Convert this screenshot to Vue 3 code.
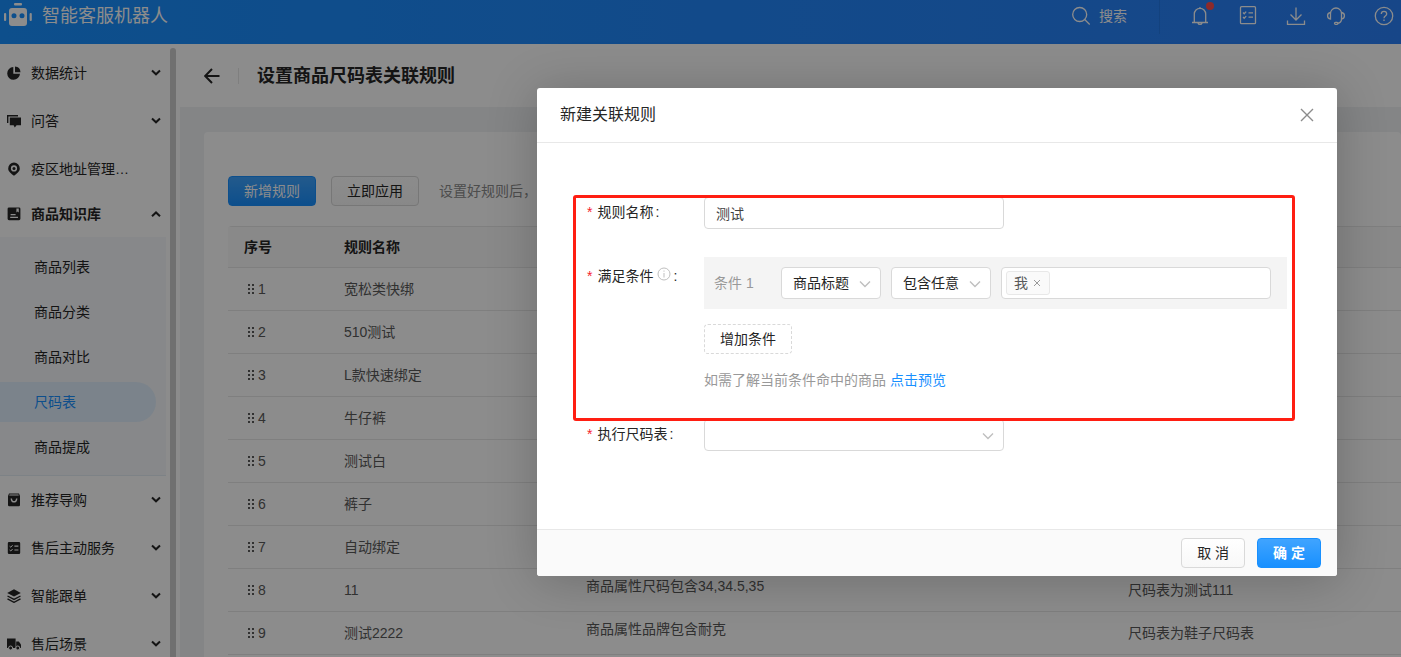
<script setup>
import { ref } from 'vue'

const menuTop = [
  { label: '数据统计', icon: 'pie', arrow: true },
  { label: '问答', icon: 'chat', arrow: true },
  { label: '疫区地址管理…', icon: 'pin', arrow: false }
]
const subMenu = ['商品列表', '商品分类', '商品对比', '尺码表', '商品提成']
const menuBottom = [
  { label: '推荐导购', icon: 'bag', arrow: true },
  { label: '售后主动服务', icon: 'list', arrow: true },
  { label: '智能跟单', icon: 'layers', arrow: true },
  { label: '售后场景', icon: 'truck', arrow: true }
]
const icons = {
  pie: '<path d="M6.3 1A6.4 6.4 0 1 0 13 7.8H6.3z"/><path d="M8 .6V6.2h5.5A6 6 0 0 0 8 .6z"/>',
  chat: '<path d="M0 1h11v1.4H1.4V9H0z"/><path d="M2.8 3.6H14v7.6H9.6L7.8 13.4 6.6 11.2H2.8z"/>',
  pin: '<path fill-rule="evenodd" d="M7 .6a5.8 5.8 0 0 1 5.8 5.8c0 3.2-3 5-5.8 7.4C4.200 11.400 1.200 9.600 1.200 6.400A5.800 5.800 0 0 1 7 .6zM7 3.300a3.100 3.100 0 1 0 0 6.200 3.100 3.100 0 0 0 0-6.200z"/><circle cx="7" cy="6.400" r="1.500"/>',
  book: '<path fill-rule="evenodd" d="M2 .4h10a1.400 1.400 0 0 1 1.400 1.400v10a1.400 1.400 0 0 1-1.400 1.400H2A1.400 1.400 0 0 1 .6 11.800V1.800A1.400 1.400 0 0 1 2 .4zM9.400 1.400v4l1.200-1 1.200 1v-4zM3.600 7v1.200h5V7zM3.200 9.800v1.300h7.800V9.800z"/>',
  bag: '<path fill-rule="evenodd" d="M2 .4h10l1 2.600v9a1.200 1.200 0 0 1-1.200 1.200H2.200A1.200 1.200 0 0 1 1 12V3zM2.600 1.600l-.4 1h9.600l-.4-1zM3.600 5.400c0 5.600 6.800 5.600 6.800 0H9c0 3.400-4 3.400-4 0z"/>',
  list: '<path fill-rule="evenodd" d="M2 1h10a1.200 1.200 0 0 1 1.200 1.200v9.600A1.200 1.200 0 0 1 12 13H2A1.200 1.200 0 0 1 .8 11.800V2.200A1.200 1.200 0 0 1 2 1zM7.400 4.600v1.200h4V4.600zM7.400 8.400v1.200h4V8.400z"/><path fill="none" stroke="#fff" d="M2.600 5.200l1.200 1 1.800-2M2.600 9l1.200 1 1.800-2"/>',
  layers: '<path d="M7 .2l6.800 3.700L7 7.600.2 3.900z"/><path fill="none" stroke="currentColor" stroke-width="1.400" d="M.5 7L7 10.400 13.500 7M.5 9.900L7 13.300l6.500-3.400"/>',
  truck: '<path d="M0 1.500h8.600V11H0z"/><path d="M9.200 4.400h2.600L14 7.400V11H9.200z"/><circle cx="3.600" cy="11" r="2" stroke="#fff"/><circle cx="10.800" cy="11" r="2" stroke="#fff"/>'
}
const rows = [
  { id: 1, name: '宽松类快绑' },
  { id: 2, name: '510测试' },
  { id: 3, name: 'L款快速绑定' },
  { id: 4, name: '牛仔裤' },
  { id: 5, name: '测试白' },
  { id: 6, name: '裤子' },
  { id: 7, name: '自动绑定' },
  { id: 8, name: '11', cond: '商品属性尺码包含34,34.5,35', action: '尺码表为测试111' },
  { id: 9, name: '测试2222', cond: '商品属性品牌包含耐克', action: '尺码表为鞋子尺码表' }
]
const ruleName = ref('测试')
const field = ref('商品标题')
const operator = ref('包含任意')
const sizeTable = ref('')
const tags = ref(['我'])
</script>

<template>
  <div class="shell">
    <header class="topbar">
      <div class="brand">
        <svg class="logo" viewBox="0 0 30 26" width="30" height="26" fill="#fff">
          <rect x="10" y="1" width="8" height="2.600" rx="1" />
          <rect x="0" y="11" width="2.200" height="8" rx="1" />
          <rect x="25.600" y="11" width="2.200" height="8" rx="1" />
          <path fill-rule="evenodd" d="M8 6h12a3 3 0 0 1 3 3v12a3 3 0 0 1-3 3H8a3 3 0 0 1-3-3V9a3 3 0 0 1 3-3zM10 11.200a2.500 2.500 0 1 0 0 5 2.500 2.500 0 0 0 0-5zM18 11.200a2.500 2.500 0 1 0 0 5 2.500 2.500 0 0 0 0-5z" />
        </svg>
        <span>智能客服机器人</span>
      </div>
      <button class="search" type="button">
        <svg viewBox="0 0 20 20" width="20" height="20"><circle cx="8.700" cy="8.500" r="7" /><path d="M13.700 13.500l5 5" /></svg>
        <span>搜索</span>
      </button>
      <nav class="tools" aria-label="工具">
        <button class="bell" type="button" aria-label="通知">
          <svg viewBox="0 0 20 20" width="20" height="20"><path d="M2 16.500h16M4.300 16.500V8a5.700 5.700 0 0 1 11.400 0v8.500M10 1v1.500M8 17c.4 1.900 3.600 1.900 4 0" /></svg>
          <i class="dot"></i>
        </button>
        <button type="button" aria-label="任务">
          <svg viewBox="0 0 20 20" width="20" height="20"><rect x="2.500" y=".7" width="15" height="17" rx="1" /><path d="M5 6.500l1.200 1.200L8.200 5.600M5 11l1.200 1.200 2-2.100M10.500 6.800H15M10.500 11.200H15" /></svg>
        </button>
        <button type="button" aria-label="下载">
          <svg viewBox="0 0 20 20" width="20" height="20"><path d="M10 1.500v12.500M4.500 8.500L10 14l5.500-5.500M1.500 14.500v3.800h17v-3.800" /></svg>
        </button>
        <button class="service" type="button" aria-label="客服">
          <svg viewBox="0 0 20 20" width="20" height="20"><path d="M4.500 13V7.500a5.500 5.500 0 0 1 11 0V13M4.500 6.500C.6 7 .6 12.500 4.500 13zM15.500 6.500c3.900.5 3.900 6 0 6.500zM15.500 13c0 3-1.500 4-4 4.300" /><rect x="8.500" y="16.300" width="3.500" height="2" rx="1" /></svg>
        </button>
        <button type="button" aria-label="帮助">
          <svg viewBox="0 0 20 20" width="20" height="20"><circle cx="10" cy="10" r="8.700" /><path d="M7.300 8c0-3.600 5.400-3.600 5.400 0 0 2-2.700 2.200-2.700 4.200M10 13.600v1.400" /></svg>
        </button>
      </nav>
    </header>

    <div class="body">
      <aside class="sidebar">
        <nav class="menu" aria-label="主菜单">
          <a v-for="m in menuTop" :key="m.label" class="item" href="#">
            <svg class="ico" viewBox="0 0 14 14" width="14" height="14" v-html="icons[m.icon]"></svg>
            <span>{{ m.label }}</span>
            <svg v-if="m.arrow" class="arrow" viewBox="0 0 10 10" width="10" height="10"><path d="M1 2.500l4 3.800 4-3.800" /></svg>
          </a>
          <a class="item open" href="#">
            <svg class="ico" viewBox="0 0 14 14" width="14" height="14" v-html="icons.book"></svg>
            <span>商品知识库</span>
            <svg class="arrow" viewBox="0 0 10 10" width="10" height="10"><path d="M1 7.300l4-3.800 4 3.800" /></svg>
          </a>
          <div class="sub">
            <a v-for="s in subMenu" :key="s" href="#" :class="{ active: s === '尺码表' }">{{ s }}</a>
          </div>
          <a v-for="m in menuBottom" :key="m.label" class="item" href="#">
            <svg class="ico" viewBox="0 0 14 14" width="14" height="14" v-html="icons[m.icon]"></svg>
            <span>{{ m.label }}</span>
            <svg class="arrow" viewBox="0 0 10 10" width="10" height="10"><path d="M1 2.500l4 3.800 4-3.800" /></svg>
          </a>
        </nav>
        <div class="scroll"></div>
      </aside>

      <main class="main">
        <div class="pagehead">
          <button type="button" aria-label="返回">
            <svg viewBox="0 0 16 16" width="16" height="16"><path d="M15.500 8H1.500M8 1L1.200 8 8 15" /></svg>
          </button>
          <h1>设置商品尺码表关联规则</h1>
        </div>
        <section class="card">
          <div class="actions">
            <button class="btn primary" type="button">新增规则</button>
            <button class="btn" type="button">立即应用</button>
            <span class="tip">设置好规则后，</span>
          </div>
          <table>
            <colgroup><col class="c1" /><col class="c2" /><col class="c3" /><col /></colgroup>
            <thead>
              <tr><th>序号</th><th>规则名称</th><th></th><th></th></tr>
            </thead>
            <tbody>
              <tr v-for="r in rows" :key="r.id">
                <td>
                  <span class="order">
                    <svg viewBox="0 0 6 10" width="6" height="10"><path d="M0 0h2v2H0zM4 0h2v2H4zM0 4h2v2H0zM4 4h2v2H4zM0 8h2v2H0zM4 8h2v2H4z" /></svg>
                    {{ r.id }}
                  </span>
                </td>
                <td>{{ r.name }}</td>
                <td class="cond">{{ r.cond }}</td>
                <td>{{ r.action }}</td>
              </tr>
            </tbody>
          </table>
        </section>
      </main>
    </div>

    <div class="mask">
      <form class="modal" role="dialog" aria-labelledby="dlg-title" @submit.prevent>
        <div class="modal-head">
          <h2 id="dlg-title">新建关联规则</h2>
          <button type="button" aria-label="关闭">
            <svg viewBox="0 0 14 14" width="14" height="14"><path d="M1 1l12 12M13 1L1 13" /></svg>
          </button>
        </div>
        <div class="modal-body">
          <div class="marked">
            <div class="row">
              <label class="label" for="rule-name"><b>*</b>规则名称<i>:</i></label>
              <input id="rule-name" v-model="ruleName" class="control wide" type="text" />
            </div>
            <div class="row">
              <div class="label tall"><b>*</b>满足条件
                <svg class="info" viewBox="0 0 14 14" width="14" height="14"><circle cx="7" cy="7" r="6" /><path d="M7 6v4.500M7 3.500v1.200" /></svg><i>:</i>
              </div>
              <div class="conditions">
                <div class="condition">
                  <span class="num">条件 1</span>
                  <div class="select">
                    <select v-model="field" class="control" aria-label="条件字段"><option>商品标题</option></select>
                    <svg viewBox="0 0 12 12" width="12" height="12"><path d="M1 3.500l5 5 5-5" /></svg>
                  </div>
                  <div class="select">
                    <select v-model="operator" class="control" aria-label="匹配方式"><option>包含任意</option></select>
                    <svg viewBox="0 0 12 12" width="12" height="12"><path d="M1 3.500l5 5 5-5" /></svg>
                  </div>
                  <div class="control tags">
                    <span v-for="t in tags" :key="t" class="tag">{{ t }}
                      <button type="button" aria-label="移除"><svg viewBox="0 0 8 8" width="8" height="8"><path d="M1 1l6 6M7 1L1 7" /></svg></button>
                    </span>
                    <input type="text" aria-label="关键词" />
                  </div>
                </div>
                <button class="btn dashed" type="button">增加条件</button>
                <p class="preview">如需了解当前条件命中的商品 <a href="#">点击预览</a></p>
              </div>
            </div>
          </div>
          <div class="row">
            <label class="label" for="size-table"><b>*</b>执行尺码表<i>:</i></label>
            <div class="select wide">
              <select id="size-table" v-model="sizeTable" class="control"><option value=""></option></select>
              <svg viewBox="0 0 12 12" width="12" height="12"><path d="M1 3.500l5 5 5-5" /></svg>
            </div>
          </div>
        </div>
        <div class="modal-foot">
          <button class="btn" type="button">取 消</button>
          <button class="btn primary strong" type="submit">确 定</button>
        </div>
      </form>
    </div>
  </div>
</template>

<style>
body { margin: 0; }
</style>

<style scoped>
.shell {
  position: relative;
  display: flex;
  flex-direction: column;
  height: 100vh;
  overflow: hidden;
  font: 14px/22px "Liberation Sans", "Noto Sans CJK SC", sans-serif;
  color: #262626;
  background: #f0f2f5;
}
* { box-sizing: border-box; }
button, input, select { font: inherit; color: inherit; margin: 0; }
button { border: 0; padding: 0; background: none; cursor: pointer; }
a { color: inherit; text-decoration: none; }
svg { display: block; flex: none; }

.topbar {
  flex: none;
  display: flex;
  align-items: center;
  height: 44px;
  padding: 0 7px 12px 4px;
  color: #fff;
  background: linear-gradient(90deg, #1890ff, #2b80f8);
}
.topbar button svg { fill: none; stroke: currentColor; stroke-width: 1.3; }
.brand { flex: 1; display: flex; align-items: center; gap: 8px; font-size: 18px; }
.logo { margin-bottom: 2px; }
.search { display: flex; align-items: center; gap: 8px; margin-right: 32px; }
.tools { display: flex; align-items: center; gap: 28px; height: 36px; padding-left: 30px; border-left: 1px solid rgba(0, 0, 0, .08); }
.bell { position: relative; }
.dot { position: absolute; top: -4px; right: -4px; width: 8px; height: 8px; border-radius: 50%; background: #ff4d4f; }
.service { margin-left: -8px; }

.body { flex: 1; display: flex; min-height: 0; }
.sidebar { flex: none; display: flex; width: 180px; overflow: hidden; background: #fff; }
.menu { width: 166px; padding-top: 5px; }
.item { display: flex; align-items: center; height: 48px; padding: 0 5px 0 7px; }
.item span { flex: 1; margin-left: 10px; white-space: nowrap; }
.item.open { height: 44px; padding-bottom: 2px; font-weight: 700; }
.ico { fill: currentColor; }
.arrow { fill: none; stroke: currentColor; stroke-width: 2; }
.sub { display: flex; flex-direction: column; gap: 5px; padding: 10px 10px 8px 0; border-bottom: 1px solid #e4edf5; background: #f6f8fb; }
.sub a { padding-left: 34px; line-height: 40px; border-radius: 0 20px 20px 0; }
.sub .active { color: #1890ff; background: #e1effd; }
.scroll { width: 6px; margin: 4px 0 0 4px; border-radius: 3px 3px 0 0; background: #ccc; }

.main { flex: 1; min-width: 0; display: flex; flex-direction: column; }
.pagehead { flex: none; display: flex; align-items: center; height: 63px; padding: 0 24px; background: #fff; }
.pagehead button { padding-right: 18px; border-right: 1px solid #e8e8e8; }
.pagehead svg { fill: none; stroke: currentColor; stroke-width: 2; }
h1 { margin: 0 0 0 18px; font-size: 18px; }
.card { flex: 1 0 auto; margin: 25px 0 0 24px; padding: 44px 0 24px 24px; border-radius: 4px; background: #fff; }
.actions { display: flex; align-items: center; gap: 15px; margin-bottom: 20px; }
.tip { margin-left: 5px; color: #8c8c8c; }

.btn {
  height: 30px;
  padding: 0 15px;
  line-height: 28px;
  border: 1px solid #d9d9d9;
  border-radius: 4px;
  background: linear-gradient(#fff, #f8f8f8);
}
.btn.primary { color: #fff; border-color: #1890ff; background: linear-gradient(#40a4ff, #1890ff); }
.btn.strong { font-weight: 700; }
.btn.dashed { border-style: dashed; background: #fff; }

table { width: 100%; table-layout: fixed; border-collapse: separate; border-spacing: 0; border-top: 1px solid #e8e8e8; border-radius: 4px 0 0 0; }
.c1 { width: 100px; }
.c2 { width: 242px; }
.c3 { width: 542px; }
th, td { padding: 0 16px; text-align: left; border-bottom: 1px solid #e8e8e8; }
th { height: 41px; background: #fafafa; }
td { height: 43px; color: #595959; }
td.cond { padding-bottom: 8px; }
.order { display: flex; align-items: center; gap: 4px; padding-left: 4px; }
.order svg { fill: #595959; }

.mask {
  position: absolute;
  inset: 0;
  display: flex;
  justify-content: flex-end;
  align-items: flex-start;
  padding: 88px 64px 0;
  background: rgba(0, 0, 0, .45);
}
.modal { width: 800px; border-radius: 3px; overflow: hidden; background: #fff; box-shadow: 0 4px 50px rgba(0, 0, 0, .22); }
.modal-head { display: flex; justify-content: space-between; align-items: center; height: 55px; padding: 0 23px; border-bottom: 1px solid #e8e8e8; }
.modal-head svg { fill: none; stroke: #8c8c8c; stroke-width: 1.4; }
h2 { margin: 0; font-size: 16px; font-weight: 400; }
.modal-body { padding: 54px 50px 78px; }
.marked { position: relative; margin-bottom: 28px; }
.marked::after {
  content: "";
  position: absolute;
  inset: -2px -8px -30px -14px;
  z-index: 1;
  border: 3px solid #ff1e12;
  border-radius: 3px;
  pointer-events: none;
}
.row { display: flex; }
.row + .row { margin-top: 28px; }
.label { flex: none; display: flex; align-items: center; width: 117px; height: 30px; white-space: nowrap; }
.label b { margin-right: 5px; color: #f5222d; font-weight: 400; }
.label i { margin-left: 2px; font-style: normal; }
.label.tall { height: 38px; }
.info { margin: 0 0 4px 4px; fill: none; stroke: #bfbfbf; stroke-width: 1; }
.control { height: 32px; padding: 0 11px; border: 1px solid #d9d9d9; border-radius: 4px; background: #fff; outline: 0; }
input.control { color: #434343; }
.wide { width: 300px; }
.select { position: relative; }
.select select { display: block; width: 100%; appearance: none; }
.select svg { position: absolute; top: 11px; right: 10px; fill: none; stroke: #bfbfbf; stroke-width: 1.4; pointer-events: none; }
.conditions { flex: 1; min-width: 0; }
.condition { display: flex; align-items: center; gap: 10px; padding: 10px 16px 10px 10px; margin-bottom: 15px; background: #f4f4f4; }
.num { width: 57px; color: #999; }
.condition .select { width: 100px; }
.tags { flex: 1; min-width: 0; display: flex; align-items: center; padding: 0 4px; }
.tag { display: flex; align-items: center; gap: 5px; height: 24px; padding: 0 8px 0 7px; border: 1px solid #e8e8e8; border-radius: 3px; color: #595959; background: #fafafa; }
.tag svg { fill: none; stroke: #999; }
.tags input { flex: 1; min-width: 0; border: 0; padding: 0 4px; outline: 0; background: none; }
.preview { margin: 15px 0 0; color: #999; }
.preview a { color: #1890ff; }
.modal-foot { display: flex; justify-content: flex-end; gap: 12px; padding: 8px 16px; border-top: 1px solid #e8e8e8; background: #fafafa; }
</style>
